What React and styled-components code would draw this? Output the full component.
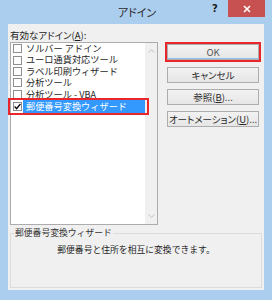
import React from "react";
import styled, { createGlobalStyle } from "styled-components";

const GlobalStyle = createGlobalStyle`
  html, body { margin: 0; padding: 0; background: #abcdee; }
  body { font-family: "Noto Sans CJK JP", "Noto Sans", sans-serif; }
`;

const Window = styled.div`
  width: 272px;
  height: 300px;
  background: #abcdee;
  display: flex;
  flex-direction: column;
  font-family: "Noto Sans CJK JP", "Noto Sans", sans-serif;
  font-feature-settings: "palt";
  color: #1e1e1e;
`;

const TitleBar = styled.div`
  height: 24px;
  flex: none;
  display: grid;
  grid-template-columns: 1fr auto 1fr;
  align-items: center;
`;

const Title = styled.div`
  grid-column: 2;
  font-size: 11px;
  line-height: 14px;
  color: #2b2b2b;
  padding-left: 2px;
`;

const Controls = styled.div`
  grid-column: 3;
  justify-self: end;
  align-self: start;
  display: flex;
  align-items: flex-start;
  margin-right: 7px;
`;

const HelpButton = styled.div`
  width: 14px;
  height: 17px;
  margin-right: 6px;
  display: flex;
  align-items: center;
  justify-content: center;
  font-family: "DejaVu Sans", sans-serif;
  font-weight: bold;
  font-size: 10px;
  color: #1a1a1a;
`;

const CloseButton = styled.div`
  width: 37px;
  height: 17px;
  background: #c75050;
  display: flex;
  align-items: center;
  justify-content: center;
`;

const Client = styled.div`
  flex: 1;
  margin: 0 8px 10px 8px;
  background: #f0f0f0;
  padding: 0 2px 2px 2px;
  display: flex;
  flex-direction: column;
  font-size: 9.5px;
`;

const FieldLabel = styled.div`
  padding-top: 4px;
  line-height: 14px;
  height: 14px;
`;

const MainRow = styled.div`
  display: flex;
  align-items: flex-start;
`;

const ListBox = styled.div`
  width: 146px;
  height: 181px;
  border: 1px solid #acacac;
  background: #fff;
  display: flex;
`;

const Items = styled.div`
  flex: 1;
  display: flex;
  flex-direction: column;
`;

const Row = styled.div`
  position: relative;
  height: ${(p) => (p.$selected ? "13px" : "11.4px")};
  display: flex;
  align-items: center;
`;

const Check = styled.div`
  width: 7px;
  height: 7px;
  border: 1px solid #8f8f8f;
  background: #fff;
  margin-left: 2px;
  flex: none;
  display: flex;
  align-items: center;
  justify-content: center;
`;

const ItemText = styled.div`
  flex: 1;
  margin-left: 1px;
  height: 100%;
  padding-left: 3px;
  display: flex;
  align-items: center;
  white-space: nowrap;
  font-size: 9.2px;
  font-feature-settings: normal;
  line-height: ${(p) => (p.$selected ? "13px" : "11.4px")};
  background: ${(p) => (p.$selected ? "#3399ff" : "transparent")};
  color: ${(p) => (p.$selected ? "#fff" : "#1e1e1e")};
`;

const Highlight = styled.div`
  position: absolute;
  left: -3px;
  right: -4px;
  top: -2px;
  bottom: -2px;
  border: 2px solid #e8262c;
  pointer-events: none;
`;

const ScrollBar = styled.div`
  width: 12px;
  background: #f0f0f0;
  display: flex;
  flex-direction: column;
  justify-content: space-between;
  align-items: center;
  padding: 6px 0;
`;

const ButtonColumn = styled.div`
  margin-left: 7px;
  width: 96px;
  display: flex;
  flex-direction: column;
`;

const DefaultFrame = styled.div`
  border: 2px solid #e8262c;
  display: flex;
`;

const Button = styled.div`
  box-sizing: border-box;
  width: 92px;
  height: 16px;
  margin: ${(p) => (p.$default ? "0" : `${p.$top}px 0 0 2px`)};
  border: 1px solid #adadad;
  background: linear-gradient(#f2f2f2, #e6e6e6);
  box-shadow: ${(p) => (p.$default ? "inset 0 -1px 0 #8fc0ee" : "none")};
  display: flex;
  align-items: center;
  justify-content: center;
  font-size: 9.5px;
  line-height: 12px;
  color: ${(p) => (p.$default ? "#555" : "#2a2a2a")};
  white-space: nowrap;
`;

const GroupBox = styled.fieldset`
  flex: 1;
  margin: 1px 0 0 0;
  padding: 0;
  border: 1px solid #dcdcdc;
  min-width: 0;
`;

const Legend = styled.legend`
  margin-left: 3px;
  padding: 0 1px;
  font-size: 8.8px;
  font-feature-settings: normal;
  line-height: 14px;
  color: #333;
`;

const Description = styled.div`
  padding-top: 3px;
  text-align: center;
  line-height: 14px;
  font-size: 8.8px;
  font-feature-settings: normal;
`;

const items = [
  "ソルバー アドイン",
  "ユーロ通貨対応ツール",
  "ラベル印刷ウィザード",
  "分析ツール",
  "分析ツール - VBA",
];

const Chevron = ({ up }) => (
  <svg width="7" height="4" viewBox="0 0 7 4">
    <path
      d={up ? "M0.5 3.5 L3.5 0.7 L6.5 3.5" : "M0.5 0.5 L3.5 3.3 L6.5 0.5"}
      fill="none"
      stroke="#c2c2c2"
      strokeWidth="1"
    />
  </svg>
);

export default function App() {
  return (
    <>
      <GlobalStyle />
      <Window>
        <TitleBar>
          <Title>アドイン</Title>
          <Controls>
            <HelpButton>?</HelpButton>
            <CloseButton>
              <svg width="8" height="8" viewBox="0 0 8 8">
                <path d="M1 1 L7 7 M7 1 L1 7" stroke="#fff" strokeWidth="1.6" />
              </svg>
            </CloseButton>
          </Controls>
        </TitleBar>
        <Client>
          <FieldLabel>
            有効なアドイン(<u>A</u>):
          </FieldLabel>
          <MainRow>
            <ListBox>
              <Items>
                {items.map((t) => (
                  <Row key={t}>
                    <Check />
                    <ItemText>{t}</ItemText>
                  </Row>
                ))}
                <Row $selected>
                  <Check>
                    <svg width="7" height="7" viewBox="0 0 7 7">
                      <path
                        d="M0.6 3.6 L2.6 5.6 L6.4 1"
                        fill="none"
                        stroke="#111"
                        strokeWidth="1.4"
                      />
                    </svg>
                  </Check>
                  <ItemText $selected>郵便番号変換ウィザード</ItemText>
                  <Highlight />
                </Row>
              </Items>
              <ScrollBar>
                <Chevron up />
                <Chevron />
              </ScrollBar>
            </ListBox>
            <ButtonColumn>
              <DefaultFrame>
                <Button $default>OK</Button>
              </DefaultFrame>
              <Button $top={5}>キャンセル</Button>
              <Button $top={6}>
                参照(<u>B</u>)...
              </Button>
              <Button $top={6}>
                オートメーション(<u>U</u>)...
              </Button>
            </ButtonColumn>
          </MainRow>
          <GroupBox>
            <Legend>郵便番号変換ウィザード</Legend>
            <Description>郵便番号と住所を相互に変換できます。</Description>
          </GroupBox>
        </Client>
      </Window>
    </>
  );
}
